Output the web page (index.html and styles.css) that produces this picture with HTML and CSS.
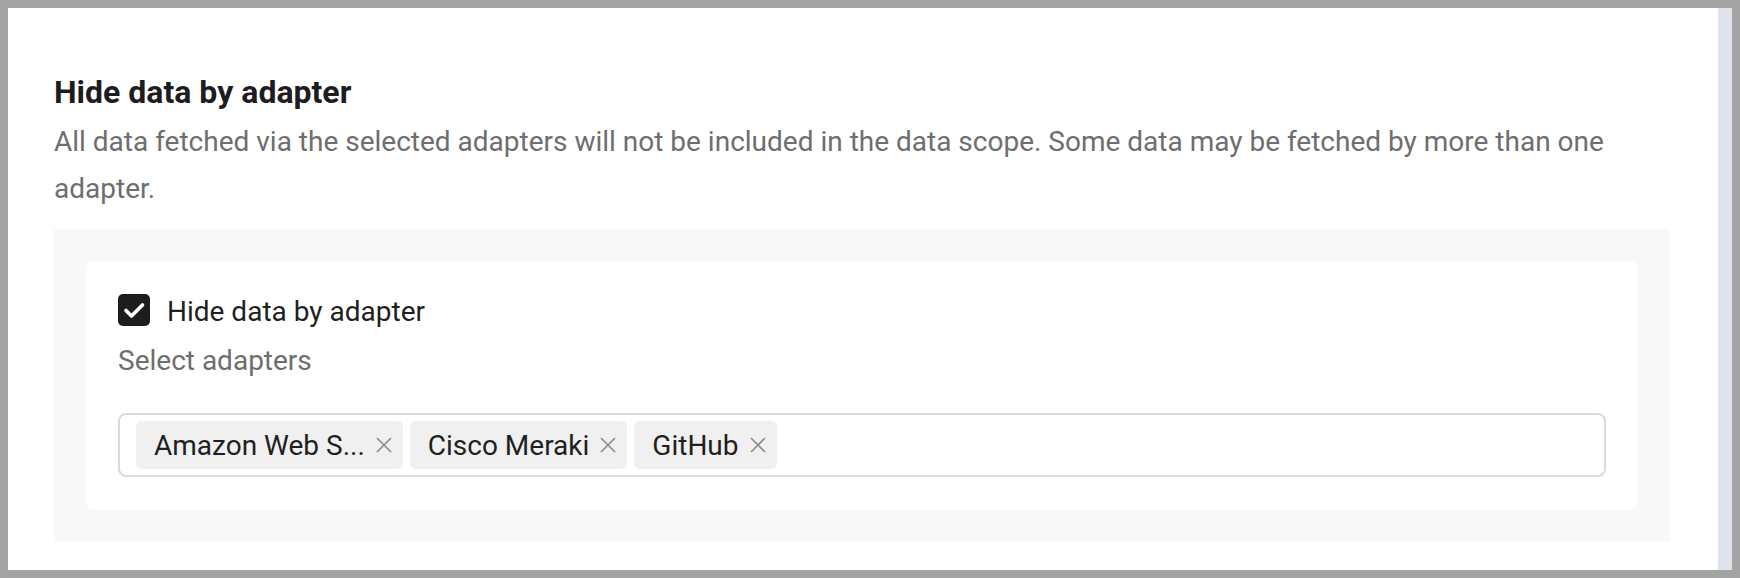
FILE: index.html
```html
<!DOCTYPE html>
<html lang="en">
<head>
<meta charset="utf-8">
<title>Hide data by adapter</title>
<link rel="stylesheet" href="styles.css">
</head>
<body>
<div class="frame">
  <main class="page">
    <h2 class="title">Hide data by adapter</h2>
    <p class="desc">All data fetched via the selected adapters will not be included in the data scope. Some data may be fetched by more than one adapter.</p>
    <section class="panel">
      <div class="card">
        <label class="check-row">
          <span class="checkbox">
            <svg viewBox="0 0 32 32" width="32" height="32" aria-hidden="true"><path d="M8 16.5 L13.5 22 L24.5 11" fill="none" stroke="#fff" stroke-width="3.6" stroke-linecap="round" stroke-linejoin="round"/></svg>
          </span>
          <span class="check-label">Hide data by adapter</span>
        </label>
        <div class="field-label">Select adapters</div>
        <div class="select">
          <span class="tag">Amazon Web S...<span class="tag-x"><svg viewBox="0 0 18 18" width="18" height="18" aria-hidden="true"><path d="M2 2 L16 16 M16 2 L2 16" stroke="#8c8c8c" stroke-width="1.6" fill="none"/></svg></span></span>
          <span class="tag">Cisco Meraki<span class="tag-x"><svg viewBox="0 0 18 18" width="18" height="18" aria-hidden="true"><path d="M2 2 L16 16 M16 2 L2 16" stroke="#8c8c8c" stroke-width="1.6" fill="none"/></svg></span></span>
          <span class="tag">GitHub<span class="tag-x"><svg viewBox="0 0 18 18" width="18" height="18" aria-hidden="true"><path d="M2 2 L16 16 M16 2 L2 16" stroke="#8c8c8c" stroke-width="1.6" fill="none"/></svg></span></span>
        </div>
      </div>
    </section>
  </main>
  <div class="scrollbar"></div>
</div>
</body>
</html>
```

FILE: styles.css
```css
html, body {
  margin: 0;
  padding: 0;
}

body {
  font-family: Roboto, "Liberation Sans", sans-serif;
  color: #1f1f1f;
}

.frame {
  box-sizing: border-box;
  width: 1740px;
  height: 578px;
  border: 8px solid #a3a3a3;
  display: flex;
  overflow: hidden;
}

.page {
  flex: 1;
  background: #ffffff;
  padding: 65px 48px 0 46px;
}

.scrollbar {
  width: 14px;
  background: #dfe3ec;
}

.title {
  margin: 0;
  font-size: 32px;
  line-height: 38px;
  font-weight: 700;
  color: #1d1d1f;
}

.desc {
  margin: 7px 0 0;
  font-size: 28px;
  line-height: 47px;
  color: #6e6e6e;
}

.panel {
  margin-top: 17px;
  padding: 32px;
  background: #f8f8f8;
}

.card {
  background: #ffffff;
  border-radius: 8px;
  padding: 33px 32px 33px;
}

.check-row {
  display: flex;
  align-items: center;
  gap: 17px;
  height: 32px;
}

.checkbox {
  width: 32px;
  height: 32px;
  border-radius: 5px;
  background: #1d1d1f;
  display: flex;
}

.check-label {
  font-size: 28px;
  line-height: 32px;
  margin-top: 4px;
  color: #1f1f1f;
}

.field-label {
  margin-top: 17px;
  font-size: 28px;
  line-height: 36px;
  color: #6e6e6e;
}

.select {
  margin-top: 34px;
  border: 2px solid #dadada;
  border-radius: 8px;
  padding: 6px 16px;
  display: flex;
  gap: 7px;
}

.tag {
  display: inline-flex;
  align-items: center;
  gap: 10px;
  height: 48px;
  padding: 0 10px 0 18px;
  background: #f0f0f0;
  border-radius: 6px;
  font-size: 28px;
  color: #1f1f1f;
  white-space: nowrap;
}

.tag-x {
  display: flex;
  width: 18px;
  height: 18px;
  align-items: center;
  justify-content: center;
}
```
